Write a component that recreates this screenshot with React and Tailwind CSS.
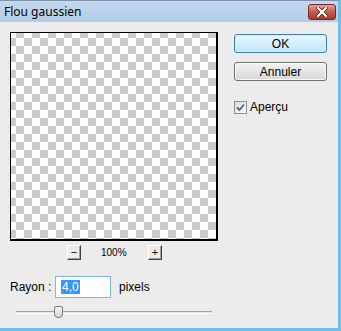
import { useState } from 'react'

const ui = { fontFamily: '"Liberation Sans", Arial, sans-serif' }

function SmallButton({ children }) {
  return (
    <div className="w-[14px] h-[15px] flex items-center justify-center bg-[#ececec] border-t border-l border-white border-r border-b border-r-[#404040] border-b-[#404040] shadow-[inset_-1px_-1px_0_#a0a0a0] text-[11px] leading-none text-black">
      {children}
    </div>
  )
}

function DialogButton({ children, focused }) {
  return (
    <button
      className={`w-[93px] h-[19px] rounded-[3px] border text-[12px] leading-none text-black flex items-center justify-center ${
        focused
          ? 'border-[#3c7fb1] bg-gradient-to-b from-[#eaf6fd] to-[#bee6fd] shadow-[inset_0_0_0_1px_#d4eefc]'
          : 'border-[#707070] bg-gradient-to-b from-[#f2f2f2] to-[#d8d8d8] shadow-[inset_0_0_0_1px_#fbfbfb]'
      }`}
      style={ui}
    >
      {children}
    </button>
  )
}

export default function App() {
  const [preview, setPreview] = useState(true)

  return (
    <div className="w-[341px] h-[331px] flex flex-col bg-[#ececec] border-r-[3px] border-b-[3px] border-[#69c0ea] overflow-hidden">
      {/* Title bar */}
      <div className="h-[22px] shrink-0 flex items-center justify-between pl-[4px] pr-[2px] bg-gradient-to-b from-[#c4d9ef] to-[#b5cce6] border-t border-[#7d93ab]">
        <span className="text-[12px] text-black" style={{ fontFamily: '"Noto Sans", sans-serif' }}>
          Flou gaussien
        </span>
        <div className="w-[28px] h-[16px] rounded-[3px] border border-[#6e2a24] bg-gradient-to-b from-[#e7a295] via-[#c75b4a] to-[#b33a28] flex items-center justify-center">
          <svg width="12" height="10" viewBox="0 0 12 10">
            <path d="M2 1 L10 9 M10 1 L2 9" stroke="#3a1a16" strokeWidth="3.6" strokeLinecap="square" />
            <path d="M2 1 L10 9 M10 1 L2 9" stroke="#ffffff" strokeWidth="2.2" strokeLinecap="square" />
          </svg>
        </div>
      </div>

      {/* Body */}
      <div className="flex flex-1" style={ui}>
        {/* Left column */}
        <div className="flex flex-col pl-[10px] pt-[10px] w-[222px]">
          <div className="w-[208px] h-[209px] border border-black border-r-2 border-b-2 bg-[repeating-conic-gradient(#cccccc_0_25%,#ffffff_0_50%)] bg-[length:16px_16px] bg-[position:-3px_-3px]" />

          <div className="flex items-center w-[208px] mt-[4px] pl-[57px]">
            <SmallButton>−</SmallButton>
            <span className="ml-[20px] w-[25px] text-[10px] text-black">100%</span>
            <span className="ml-[22px]">
              <SmallButton>+</SmallButton>
            </span>
          </div>

          <div className="flex items-center mt-[16px] text-[12px] text-black">
            <span className="w-[45px]">Rayon :</span>
            <div className="w-[56px] h-[22px] border border-[#7eb4ea] bg-white flex items-center pl-[5px]">
              <span className="bg-[#3399ff] text-white px-[1px] leading-[14px]">4,0</span>
            </div>
            <span className="ml-[8px]">pixels</span>
          </div>

          <div className="relative w-[196px] h-[12px] ml-[6px] mt-[8px] flex items-center">
            <div className="w-full h-[3px] border-t border-[#a0a0a0] border-b border-b-white bg-[#e3e3e3]" />
            <div className="absolute left-[38px] top-0 w-[9px] h-[12px] rounded-b-[4px] rounded-t-[2px] border border-[#7a7a7a] bg-gradient-to-b from-[#f4f4f4] to-[#d9d9d9]" />
          </div>
        </div>

        {/* Right column */}
        <div className="flex flex-col pl-[12px] pt-[12px]">
          <DialogButton focused>OK</DialogButton>
          <div className="mt-[9px]">
            <DialogButton>Annuler</DialogButton>
          </div>
          <label className="flex items-center mt-[17px] text-[12px] text-black cursor-default">
            <span
              onClick={() => setPreview(!preview)}
              className="w-[13px] h-[13px] border border-[#8f8f8f] bg-gradient-to-br from-[#dcdcdc] to-[#fdfdfd] flex items-center justify-center"
            >
              {preview && (
                <svg width="9" height="9" viewBox="0 0 9 9">
                  <path d="M1 4.5 L3.5 7 L8 1.5" fill="none" stroke="#4a5f97" strokeWidth="1.8" />
                </svg>
              )}
            </span>
            <span className="ml-[3px]">Aperçu</span>
          </label>
        </div>
      </div>
    </div>
  )
}
